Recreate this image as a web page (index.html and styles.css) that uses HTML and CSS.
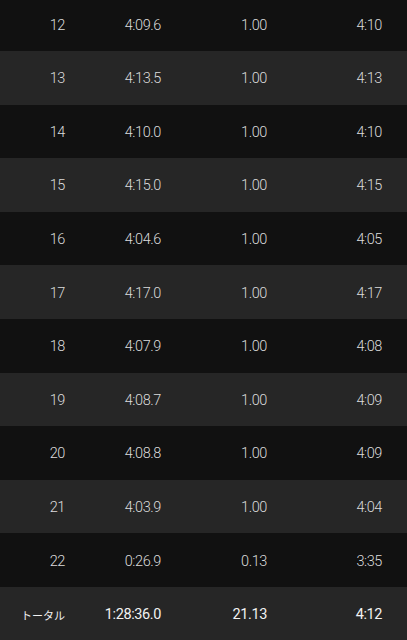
FILE: index.html
```html
<!doctype html>
<html lang="ja">
<head>
    <meta charset="UTF-8">
    <meta name="viewport" content="width=device-width, initial-scale=1.0">
    <title>ラップ</title>
    <link rel="stylesheet" href="styles.css">
</head>
<body>
    <div class="laps">
        <div class="lap"><span>12</span><span>4:09.6</span><span>1.00</span><span>4:10</span></div>
        <div class="lap"><span>13</span><span>4:13.5</span><span>1.00</span><span>4:13</span></div>
        <div class="lap"><span>14</span><span>4:10.0</span><span>1.00</span><span>4:10</span></div>
        <div class="lap"><span>15</span><span>4:15.0</span><span>1.00</span><span>4:15</span></div>
        <div class="lap"><span>16</span><span>4:04.6</span><span>1.00</span><span>4:05</span></div>
        <div class="lap"><span>17</span><span>4:17.0</span><span>1.00</span><span>4:17</span></div>
        <div class="lap"><span>18</span><span>4:07.9</span><span>1.00</span><span>4:08</span></div>
        <div class="lap"><span>19</span><span>4:08.7</span><span>1.00</span><span>4:09</span></div>
        <div class="lap"><span>20</span><span>4:08.8</span><span>1.00</span><span>4:09</span></div>
        <div class="lap"><span>21</span><span>4:03.9</span><span>1.00</span><span>4:04</span></div>
        <div class="lap"><span>22</span><span>0:26.9</span><span>0.13</span><span>3:35</span></div>
        <div class="lap total"><span class="label">トータル</span><span>1:28:36.0</span><span>21.13</span><span>4:12</span></div>
    </div>
</body>
</html>
```

FILE: styles.css
```css
:root {
    --row-dark: #111111;
    --row-light: #262626;
    --text-color: #dcdcdc;
}

body {
    margin: 0;
    padding: 0;
    background-color: var(--row-dark);
    font-family: Roboto, "Noto Sans CJK JP", sans-serif;
    overflow: hidden;
}

.laps {
    margin-top: -2.6px;
}

.lap {
    display: grid;
    grid-template-columns: 65px 96px 106px 115px;
    align-items: center;
    box-sizing: border-box;
    height: 53.6px;
    padding-top: 2px;
    color: var(--text-color);
    font-size: 14.5px;
    font-weight: 300;
    letter-spacing: -0.4px;
    background-color: var(--row-dark);
}

.lap:nth-child(even) {
    background-color: var(--row-light);
}

.lap span {
    text-align: right;
}

.total {
    color: #f2f2f2;
    font-weight: 400;
}

.total .label {
    font-size: 11px;
    letter-spacing: 0;
}
```
